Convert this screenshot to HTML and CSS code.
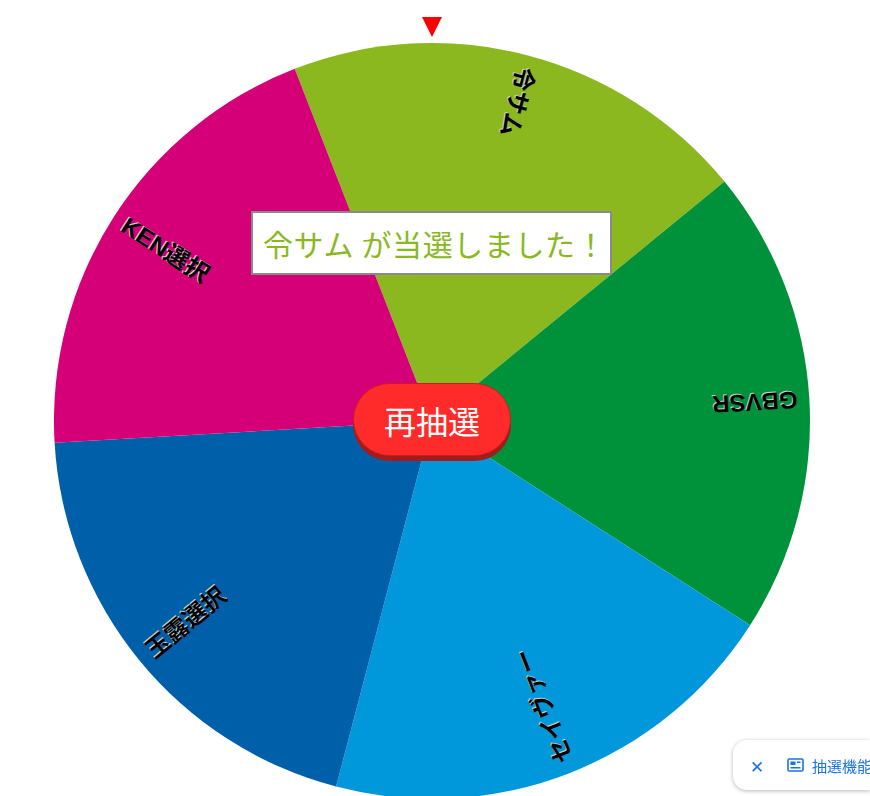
FILE: index.html
```html
<!DOCTYPE html>
<html lang="ja">
<head>
<meta charset="utf-8">
<title>抽選ルーレット</title>
<link rel="stylesheet" href="styles.css">
</head>
<body>
<div class="stage">
  <svg class="pointer" width="20" height="20" viewBox="0 0 20 20"><polygon points="0,0 20,0 10,20" fill="#ff0000"/></svg>
  <svg class="wheel" width="756" height="756" viewBox="-378 -378 756 756">
    <path d="M0 0 L-137.3 -352.2 A378 378 0 0 1 292.5 -239.4 Z" fill="#8ab81e"/>
    <path d="M0 0 L292.5 -239.4 A378 378 0 0 1 318.1 204.2 Z" fill="#00913b"/>
    <path d="M0 0 L318.1 204.2 A378 378 0 0 1 -95.9 365.6 Z" fill="#0098da"/>
    <path d="M0 0 L-95.9 365.6 A378 378 0 0 1 -377.4 21.8 Z" fill="#005fa9"/>
    <path d="M0 0 L-377.4 21.8 A378 378 0 0 1 -137.3 -352.2 Z" fill="#d50077"/>
    <g class="labels">
      <text class="shadow" transform="translate(-1 -1) rotate(105)" x="-366" y="0">令サム</text>
      <text transform="rotate(105)" x="-366" y="0">令サム</text>
      <text class="shadow" transform="translate(-1 -1) rotate(176.7)" x="-366" y="0">GBVSR</text>
      <text transform="rotate(176.7)" x="-366" y="0">GBVSR</text>
      <text class="shadow" transform="translate(-1 -1) rotate(248.7)" x="-366" y="0">セイヴァー</text>
      <text transform="rotate(248.7)" x="-366" y="0">セイヴァー</text>
      <text class="shadow" transform="translate(-1 -1) rotate(320.7)" x="-366" y="0">玉露選択</text>
      <text transform="rotate(320.7)" x="-366" y="0">玉露選択</text>
      <text class="shadow" transform="translate(-1 -1) rotate(32.7)" x="-366" y="0">KEN選択</text>
      <text transform="rotate(32.7)" x="-366" y="0">KEN選択</text>
    </g>
  </svg>
  <div class="result">令サム が当選しました！</div>
  <button class="respin">再抽選</button>
</div>
<div class="toast">
  <span class="toast-close">✕</span>
  <svg class="toast-icon" width="17" height="14" viewBox="0 0 17 14">
    <rect x="1" y="1" width="15" height="12" rx="1.2" fill="none" stroke="#1a73e8" stroke-width="1.6"/>
    <rect x="3.5" y="3.5" width="5" height="3.5" fill="#1a73e8"/>
    <line x1="10" y1="4.2" x2="13.5" y2="4.2" stroke="#1a73e8" stroke-width="1.4"/>
    <line x1="3.5" y1="9.7" x2="13.5" y2="9.7" stroke="#1a73e8" stroke-width="1.4"/>
  </svg>
  <span class="toast-text">抽選機能</span>
</div>
</body>
</html>
```

FILE: styles.css
```css
html, body {
  margin: 0;
  padding: 0;
  background: #ffffff;
  overflow: hidden;
  width: 870px;
  height: 796px;
}

.stage {
  position: relative;
  box-sizing: border-box;
  width: 870px;
  height: 796px;
  padding: 43px 0 0 54px;
  overflow: hidden;
}

.wheel {
  display: block;
}

.pointer {
  position: absolute;
  left: 422px;
  top: 17px;
}

.labels text {
  font-family: "Liberation Sans", Arial, "Noto Sans CJK JP", sans-serif;
  font-weight: bold;
  font-size: 24px;
  fill: #000000;
  dominant-baseline: central;
}

.labels text.shadow {
  fill: #cfcfcf;
}

.result {
  position: absolute;
  left: 251px;
  top: 211px;
  box-sizing: border-box;
  width: 361px;
  padding: 8px 10px;
  border: 2px solid #8a8a8a;
  background: #ffffff;
  color: #8ab81e;
  font-family: "Noto Sans CJK JP", sans-serif;
  font-size: 30px;
  letter-spacing: 0.6px;
  white-space: nowrap;
}

.respin {
  position: absolute;
  left: 353px;
  top: 383px;
  width: 158px;
  height: 73px;
  padding: 0;
  border: 1px solid #c81e1e;
  border-radius: 37px;
  background: #ff2a2a;
  box-shadow: 0 5px 0 #a31b1b;
  color: #ffffff;
  font-family: "Noto Sans CJK JP", sans-serif;
  font-size: 32px;
  line-height: 1;
}

.toast {
  position: fixed;
  left: 733px;
  top: 740px;
  width: 137px;
  height: 50px;
  display: flex;
  align-items: center;
  overflow: hidden;
  background: #ffffff;
  border-radius: 14px 0 0 14px;
  box-shadow: 0 1px 4px rgba(0, 0, 0, 0.28);
  color: #1a73e8;
  font-family: "Noto Sans CJK JP", sans-serif;
  font-size: 15px;
  white-space: nowrap;
}

.toast-close {
  margin-left: 17px;
  font-size: 17px;
  line-height: 1;
}

.toast-icon {
  flex: none;
  margin-left: 23px;
}

.toast-text {
  margin-left: 8px;
}
```
